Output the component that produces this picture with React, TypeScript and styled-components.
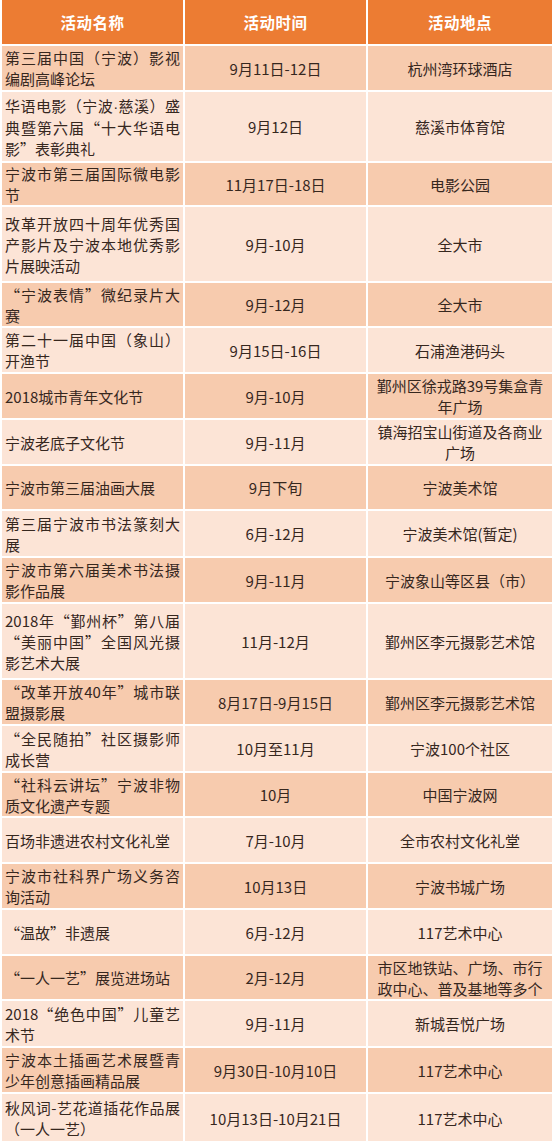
import React from "react";
import styled, { createGlobalStyle } from "styled-components";

const GlobalStyle = createGlobalStyle`
  html, body {
    margin: 0;
    padding: 0;
    background: #fff;
  }
  body {
    font-family: "Noto Sans CJK SC", "Noto Sans", sans-serif;
  }
`;

type Row = {
  name: string[];
  time: string;
  place: string[];
  h: number;
};

const rows: Row[] = [
  { name: ["第三届中国（宁波）影视", "编剧高峰论坛"], time: "9月11日-12日", place: ["杭州湾环球酒店"], h: 46 },
  { name: ["华语电影（宁波·慈溪）盛", "典暨第六届“十大华语电", "影”表彰典礼"], time: "9月12日", place: ["慈溪市体育馆"], h: 71 },
  { name: ["宁波市第三届国际微电影", "节"], time: "11月17日-18日", place: ["电影公园"], h: 44 },
  { name: ["改革开放四十周年优秀国", "产影片及宁波本地优秀影", "片展映活动"], time: "9月-10月", place: ["全大市"], h: 76 },
  { name: ["“宁波表情”微纪录片大", "赛"], time: "9月-12月", place: ["全大市"], h: 45 },
  { name: ["第二十一届中国（象山）", "开渔节"], time: "9月15日-16日", place: ["石浦渔港码头"], h: 46 },
  { name: ["2018城市青年文化节"], time: "9月-10月", place: ["鄞州区徐戎路39号集盒青", "年广场"], h: 46 },
  { name: ["宁波老底子文化节"], time: "9月-11月", place: ["镇海招宝山街道及各商业", "广场"], h: 46 },
  { name: ["宁波市第三届油画大展"], time: "9月下旬", place: ["宁波美术馆"], h: 45 },
  { name: ["第三届宁波市书法篆刻大", "展"], time: "6月-12月", place: ["宁波美术馆(暂定)"], h: 47 },
  { name: ["宁波市第六届美术书法摄", "影作品展"], time: "9月-11月", place: ["宁波象山等区县（市）"], h: 46 },
  { name: ["2018年“鄞州杯”第八届", "“美丽中国”全国风光摄", "影艺术大展"], time: "11月-12月", place: ["鄞州区李元摄影艺术馆"], h: 76 },
  { name: ["“改革开放40年”城市联", "盟摄影展"], time: "8月17日-9月15日", place: ["鄞州区李元摄影艺术馆"], h: 46 },
  { name: ["“全民随拍”社区摄影师", "成长营"], time: "10月至11月", place: ["宁波100个社区"], h: 47 },
  { name: ["“社科云讲坛”宁波非物", "质文化遗产专题"], time: "10月", place: ["中国宁波网"], h: 45 },
  { name: ["百场非遗进农村文化礼堂"], time: "7月-10月", place: ["全市农村文化礼堂"], h: 46 },
  { name: ["宁波市社科界广场义务咨", "询活动"], time: "10月13日", place: ["宁波书城广场"], h: 46 },
  { name: ["“温故”非遗展"], time: "6月-12月", place: ["117艺术中心"], h: 46 },
  { name: ["“一人一艺”展览进场站"], time: "2月-12月", place: ["市区地铁站、广场、市行", "政中心、普及基地等多个"], h: 45 },
  { name: ["2018“绝色中国”儿童艺", "术节"], time: "9月-11月", place: ["新城吾悦广场"], h: 47 },
  { name: ["宁波本土插画艺术展暨青", "少年创意插画精品展"], time: "9月30日-10月10日", place: ["117艺术中心"], h: 46 },
  { name: ["秋风词-艺花道插花作品展", "（一人一艺）"], time: "10月13日-10月21日", place: ["117艺术中心"], h: 50 },
];

const Table = styled.table`
  width: 552px;
  table-layout: fixed;
  border-collapse: collapse;
  font-family: "Noto Sans CJK SC", "Noto Sans", sans-serif;
  font-size: 15px;
  color: #36271e;
`;

const HeadRow = styled.tr`
  height: 45px;
  background: #ec7c33;
`;

const HeadCell = styled.th`
  border: 2px solid #fff;
  border-top: none;
  color: #fff;
  font-weight: 700;
  font-size: 15.5px;
  text-align: center;
  vertical-align: middle;
  padding: 0;
  letter-spacing: 0.5px;
`;

const BodyRow = styled.tr<{ $dark: boolean; $h: number }>`
  height: ${(p) => p.$h}px;
  background: ${(p) => (p.$dark ? "#f7cbae" : "#fce4d6")};
`;

const Cell = styled.td<{ $align: "left" | "center" }>`
  border: 2px solid #fff;
  padding: 0 3px;
  line-height: 21px;
  text-align: ${(p) => p.$align};
  vertical-align: middle;
  overflow: hidden;
`;

const NameLine = styled.span<{ $justify: boolean }>`
  display: block;
  white-space: nowrap;
  text-align: ${(p) => (p.$justify ? "justify" : "left")};
  text-align-last: ${(p) => (p.$justify ? "justify" : "left")};
`;

// the middle dot is narrow in the original, not full width
const Dot = styled.span`
  font-family: "Liberation Sans", sans-serif;
`;

const PlaceLine = styled.span`
  display: block;
  white-space: nowrap;
`;

function renderLine(line: string) {
  const parts = line.split("·");
  return parts.map((part, k) => (
    <React.Fragment key={k}>
      {k > 0 && <Dot>·</Dot>}
      {part}
    </React.Fragment>
  ));
}

export default function App() {
  return (
    <>
      <GlobalStyle />
      <Table lang="zh-CN">
        <colgroup>
          <col style={{ width: 183 }} />
          <col style={{ width: 183 }} />
          <col style={{ width: 186 }} />
        </colgroup>
        <thead>
          <HeadRow>
            <HeadCell>活动名称</HeadCell>
            <HeadCell>活动时间</HeadCell>
            <HeadCell>活动地点</HeadCell>
          </HeadRow>
        </thead>
        <tbody>
          {rows.map((r, i) => (
            <BodyRow key={i} $dark={i % 2 === 0} $h={r.h}>
              <Cell $align="left">
                {r.name.map((line, j) => (
                  <NameLine key={j} $justify={j < r.name.length - 1}>
                    {renderLine(line)}
                  </NameLine>
                ))}
              </Cell>
              <Cell $align="center">{r.time}</Cell>
              <Cell $align="center">
                {r.place.map((line, j) => (
                  <PlaceLine key={j}>{line}</PlaceLine>
                ))}
              </Cell>
            </BodyRow>
          ))}
        </tbody>
      </Table>
    </>
  );
}
